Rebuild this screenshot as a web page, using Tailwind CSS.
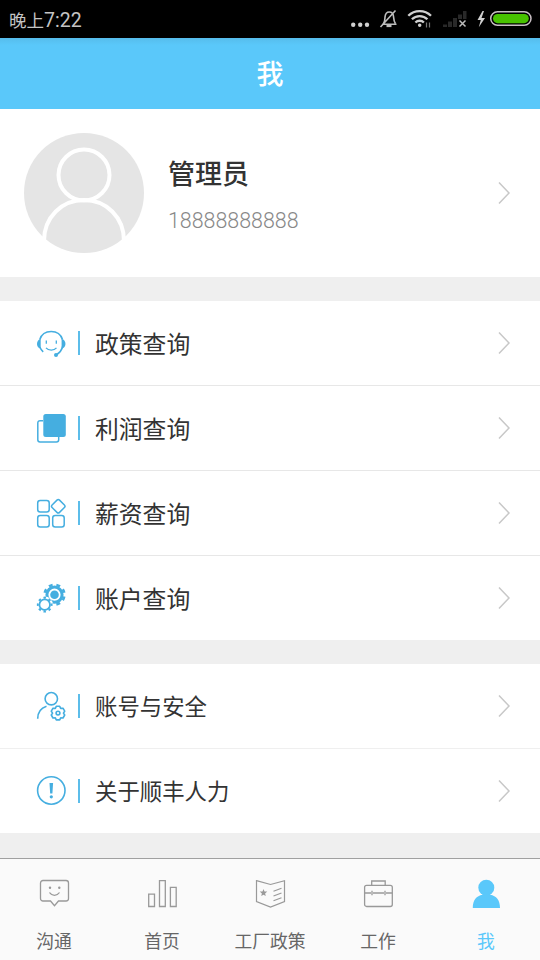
<!DOCTYPE html>
<html lang="zh-CN">
<head>
<meta charset="utf-8">
<title>我</title>
<script src="https://cdn.jsdelivr.net/npm/@tailwindcss/browser@4"></script>
</head>
<body class="w-[540px] h-[960px] overflow-hidden bg-[#efefef] font-['Roboto','Noto_Sans_CJK_SC',sans-serif] text-[#333333]">
<div class="flex flex-col h-[960px]">
  <div class="h-[38px] shrink-0 bg-black flex items-center justify-between pl-[9px] text-[#c4c4c4]">
    <span class="text-[17.500px] leading-[38px] pt-[3px]">晚上<span class="text-[19.500px]">7:22</span></span>
    <svg class="w-[200px] h-[38px]" viewBox="340 0 200 38" fill="none">
      <g fill="#d0d0d0"><circle cx="353.2" cy="24.7" r="2.2"/><circle cx="360.2" cy="24.7" r="2.2"/><circle cx="367" cy="24.7" r="2.2"/></g>
      <g stroke="#bdbdbd" stroke-width="1.6"><path d="M382 24.2h14.5M383.500 23.500c1.500-2 1.300-4 1.500-6.500.3-3 1.800-5 4.200-5s4.200 2 4.400 5c.2 2.500.2 4.500 1.800 6.500M380.500 27l15-16.500"/><path d="M386.500 26h5" stroke-width="2.200"/></g>
      <g stroke="#d0d0d0" stroke-width="2.300"><path d="M408.300 15.800a16 16 0 0 1 22.700 0M411.900 19.300a11 11 0 0 1 15.500 0M415.400 22.500a6 6 0 0 1 8.500 0"/><circle cx="419.700" cy="25.200" r="1" fill="#d0d0d0" stroke-width="1.500"/></g>
      <path d="M426.500 22.500v5M429.500 22.500v5" stroke="#777" stroke-width="1.200"/>
      <path d="M443 24.500h4v2.500h-4zM448 21.500h4v5.500h-4zM453 18h4v9h-4zM458 14.500h4v4.500h-4zM463 11h3.500v8h-3.500z" fill="#292929"/>
      <path d="M459.500 20.500l6 6M465.500 20.500l-6 6" stroke="#bdbdbd" stroke-width="1.500"/>
      <path d="M482.500 11l-5 9h3.300l-2 7.200 6.200-9.200h-3.500l2.500-7z" fill="#d0d0d0"/>
      <rect x="490.700" y="11.700" width="40.300" height="13.600" rx="6.800" stroke="#c9bfc4" stroke-width="1.500"/>
      <rect x="493" y="14" width="35.800" height="9.200" rx="4.600" fill="#48c200"/>
    </svg>
  </div>
  <div class="h-[71px] shrink-0 bg-linear-to-b from-[#56bdec] to-[#5ac8fa] to-10% flex items-center justify-center text-white text-[27px] font-medium pt-[4px]">我</div>
  <div class="h-[168px] shrink-0 bg-white flex items-center pl-6 pr-[30px]">
    <svg class="w-[120px] h-[120px]" viewBox="0 0 120 120" fill="none">
      <circle cx="60" cy="60" r="60" fill="#e5e5e5"/>
      <g stroke="#fff" stroke-width="4"><circle cx="60" cy="42" r="25.500"/><path d="M20 108c0-24 18-41 40-41s40 17 40 41"/></g>
    </svg>
    <div class="ml-6 grow flex flex-col pt-[4px]">
      <span class="text-[27px] leading-[40px] font-medium">管理员</span>
      <span class="text-[21.400px] leading-[30px] mt-[11px] font-light text-[#888888]">18888888888</span>
    </div>
    <svg class="w-[12px] h-[22px]" viewBox="0 0 12 22" fill="none" stroke="#c8c8c8" stroke-width="1.500"><path d="M1 .5L11 11 1 21.500"/></svg>
  </div>

  <div class="mt-6 bg-white shrink-0">
    <div class="h-[85px] border-b border-[#e7e7e7] flex items-center pl-[35px] pr-[30px]">
      <svg class="w-8 h-8" viewBox="0 0 32 32" fill="none" stroke="#45aee0" stroke-width="1.600">
        <path d="M4.800 12.500C6.500 7.200 11 4.500 16.200 4.500S25.800 7.200 27.500 12.500M27.800 19c-.9 4-3.200 7-6.800 9M4.800 20c.8 2 2 3.600 3.400 4.800"/>
        <path d="M5.700 12C.8 12.800.8 21 5.700 21.700zM26.600 12C31.800 12.800 31.800 21 26.600 21.700z" fill="#45aee0" stroke="none"/>
        <circle cx="21" cy="28" r="2" fill="#45aee0" stroke="none"/>
        <path d="M11.300 13.500v3.200M21.300 13.500v3.200M11 20.800c2.500 3 8 3 10.500 0" stroke-width="1.300"/>
      </svg>
      <span class="w-[1.500px] h-6 bg-[#5cbdea] ml-[11px]"></span>
      <span class="ml-[15.500px] grow pt-[5px] text-[23.800px]">政策查询</span>
      <svg class="w-[12px] h-[22px]" viewBox="0 0 12 22" fill="none" stroke="#c8c8c8" stroke-width="1.500"><path d="M1 .5L11 11 1 21.500"/></svg>
    </div>
    <div class="h-[85px] border-b border-[#e7e7e7] flex items-center pl-[35px] pr-[30px]">
      <svg class="w-8 h-8" viewBox="0 0 32 32" fill="none">
        <path d="M8 8.700H5a2.200 2.200 0 0 0-2.200 2.200V27.800A2.200 2.200 0 0 0 5 30h16.500a2.200 2.200 0 0 0 2.200-2.200V25" stroke="#45aee0" stroke-width="1.500"/>
        <rect x="8.300" y="2" width="22.500" height="23" rx="2.500" fill="#45aee0"/>
      </svg>
      <span class="w-[1.500px] h-6 bg-[#5cbdea] ml-[11px]"></span>
      <span class="ml-[15.500px] grow pt-[5px] text-[23.800px]">利润查询</span>
      <svg class="w-[12px] h-[22px]" viewBox="0 0 12 22" fill="none" stroke="#c8c8c8" stroke-width="1.500"><path d="M1 .5L11 11 1 21.500"/></svg>
    </div>
    <div class="h-[85px] border-b border-[#e7e7e7] flex items-center pl-[35px] pr-[30px]">
      <svg class="w-8 h-8" viewBox="0 0 32 32" fill="none" stroke="#45aee0" stroke-width="1.500">
        <rect x="2.700" y="3.500" width="11.500" height="11.500" rx="2.500"/>
        <rect x="2.700" y="18.500" width="11.500" height="11.500" rx="2.500"/>
        <rect x="17.700" y="18.500" width="11.500" height="11.500" rx="2.500"/>
        <rect x="18" y="4" width="10.500" height="10.500" rx="1.800" transform="rotate(45 23.250 9.250)"/>
      </svg>
      <span class="w-[1.500px] h-6 bg-[#5cbdea] ml-[11px]"></span>
      <span class="ml-[15.500px] grow pt-[5px] text-[23.800px]">薪资查询</span>
      <svg class="w-[12px] h-[22px]" viewBox="0 0 12 22" fill="none" stroke="#c8c8c8" stroke-width="1.500"><path d="M1 .5L11 11 1 21.500"/></svg>
    </div>
    <div class="h-[84px] flex items-center pl-[35px] pr-[30px]">
      <svg class="w-8 h-8" viewBox="0 0 32 32" fill="none" stroke="#45aee0">
        <circle cx="19.500" cy="12.700" r="7.600" stroke-width="3"/>
        <circle cx="19.500" cy="12.700" r="9.900" stroke-width="2.600" pathLength="80" stroke-dasharray="5 5" stroke-dashoffset="-2.500"/>
        <circle cx="19.500" cy="12.700" r="4.300" fill="#45aee0" stroke="none"/>
        <circle cx="9.700" cy="22.700" r="8.200" fill="#fff" stroke="none"/>
        <circle cx="9.700" cy="22.700" r="5.300" stroke-width="1.800"/>
        <circle cx="9.700" cy="22.700" r="6.900" stroke-width="1.900" pathLength="80" stroke-dasharray="4.600 5.400" stroke-dashoffset="2.300"/>
      </svg>
      <span class="w-[1.500px] h-6 bg-[#5cbdea] ml-[11px]"></span>
      <span class="ml-[15.500px] grow pt-[5px] text-[23.800px]">账户查询</span>
      <svg class="w-[12px] h-[22px]" viewBox="0 0 12 22" fill="none" stroke="#c8c8c8" stroke-width="1.500"><path d="M1 .5L11 11 1 21.500"/></svg>
    </div>
  </div>

  <div class="mt-6 bg-white shrink-0">
    <div class="h-[85px] border-b border-[#efefef] flex items-center pl-[35px] pr-[30px]">
      <svg class="w-8 h-8" viewBox="0 0 32 32" fill="none" stroke="#45aee0" stroke-width="1.600">
        <circle cx="16.300" cy="8.700" r="6.200"/>
        <path d="M2.700 28.800c0-6.500 3.500-10.800 8.800-12.500"/>
        <path d="M21.300 16.300h3.400l1 2.100 2.300-.2 1.700 3-1.300 1.900 1.300 1.900-1.700 3-2.300-.2-1 2.100h-3.400l-1-2.100-2.300.2-1.700-3 1.300-1.900-1.300-1.900 1.700-3 2.300.2z" stroke-linejoin="round"/>
        <circle cx="23" cy="23.100" r="1.900"/>
      </svg>
      <span class="w-[1.500px] h-6 bg-[#5cbdea] ml-[11px]"></span>
      <span class="ml-[15.500px] grow pt-[3px] text-[22.400px]">账号与安全</span>
      <svg class="w-[12px] h-[22px]" viewBox="0 0 12 22" fill="none" stroke="#c8c8c8" stroke-width="1.500"><path d="M1 .5L11 11 1 21.500"/></svg>
    </div>
    <div class="h-[84px] flex items-center pl-[35px] pr-[30px]">
      <svg class="w-8 h-8" viewBox="0 0 32 32" fill="none">
        <circle cx="16.300" cy="15.500" r="13.700" stroke="#45aee0" stroke-width="1.600"/>
        <path d="M14.500 8h3.600l-.7 10.500h-2.200z" fill="#45aee0"/><circle cx="16.300" cy="21.800" r="1.600" fill="#45aee0"/>
      </svg>
      <span class="w-[1.500px] h-6 bg-[#5cbdea] ml-[11px]"></span>
      <span class="ml-[15.500px] grow pt-[3px] text-[22.400px]">关于顺丰人力</span>
      <svg class="w-[12px] h-[22px]" viewBox="0 0 12 22" fill="none" stroke="#c8c8c8" stroke-width="1.500"><path d="M1 .5L11 11 1 21.500"/></svg>
    </div>
  </div>

  <div class="mt-auto h-[102px] shrink-0 bg-[#fafafa] border-t border-[#a0a0a0] grid grid-cols-5 text-[17.800px] leading-[26px] text-[#666666]">
    <div class="flex flex-col items-center pt-[18px]">
      <svg class="w-8 h-8" viewBox="0 0 32 32" fill="none" stroke="#999" stroke-width="1.300">
        <path d="M5 3.500h23a2.500 2.500 0 0 1 2.500 2.500v15.500A2.500 2.500 0 0 1 28 24h-7.500L16.500 28.700 12.500 24H5a2.500 2.500 0 0 1-2.500-2.500V6A2.500 2.500 0 0 1 5 3.500z"/>
        <path d="M11.500 15.500c2.500 3.700 7.500 3.700 10 0"/><g fill="#999" stroke="none"><circle cx="12" cy="10.800" r="1.200"/><circle cx="21.300" cy="10.800" r="1.200"/></g>
      </svg>
      <span class="mt-[20px]">沟通</span>
    </div>
    <div class="flex flex-col items-center pt-[18px]">
      <svg class="w-8 h-8" viewBox="0 0 32 32" fill="none" stroke="#999" stroke-width="1.300"><path d="M2.700 17.200h5.800v12.300H2.700zM13.500 3.600h5.800v25.900h-5.800zM24.400 10.400h5.800v19.100h-5.800z"/></svg>
      <span class="mt-[20px]">首页</span>
    </div>
    <div class="flex flex-col items-center pt-[18px]">
      <svg class="w-8 h-8" viewBox="0 0 32 32" fill="none" stroke="#999" stroke-width="1.200">
        <path d="M2.500 3.700L16.500 7.500 30.500 3.700V24.500L16.500 30 2.500 24.500zM19.500 14.200l8-3M19.500 19l8-3M19.500 23.800l8-3"/>
        <path d="M9.500 12l1 2.400 2.800.2-2.200 1.800.7 2.700-2.300-1.400-2.300 1.400.7-2.700-2.200-1.800 2.800-.2z" fill="#999" stroke="none"/>
      </svg>
      <span class="mt-[20px]">工厂政策</span>
    </div>
    <div class="flex flex-col items-center pt-[18px]">
      <svg class="w-8 h-8" viewBox="0 0 32 32" fill="none" stroke="#999" stroke-width="1.300">
        <rect x="2.600" y="8.300" width="27.700" height="21.200" rx="2"/><path d="M9.700 8.300V4h13.500v4.300M2.600 16h6.400M11 16h11M24 16h6.300M10 13.800v4.500M23 13.800v4.500"/>
      </svg>
      <span class="mt-[20px]">工作</span>
    </div>
    <div class="flex flex-col items-center pt-[18px] text-[#5ac8fa]">
      <svg class="w-8 h-8" viewBox="0 0 32 32" fill="#5ac8fa"><circle cx="16.300" cy="10.700" r="8"/><path d="M12.500 15h7.800v2.800c6 1.200 9.700 5.200 9.700 13.200H2.800c0-8 3.700-12 9.700-13.200z"/></svg>
      <span class="mt-[20px]">我</span>
    </div>
  </div>
</div>
</body>
</html>
